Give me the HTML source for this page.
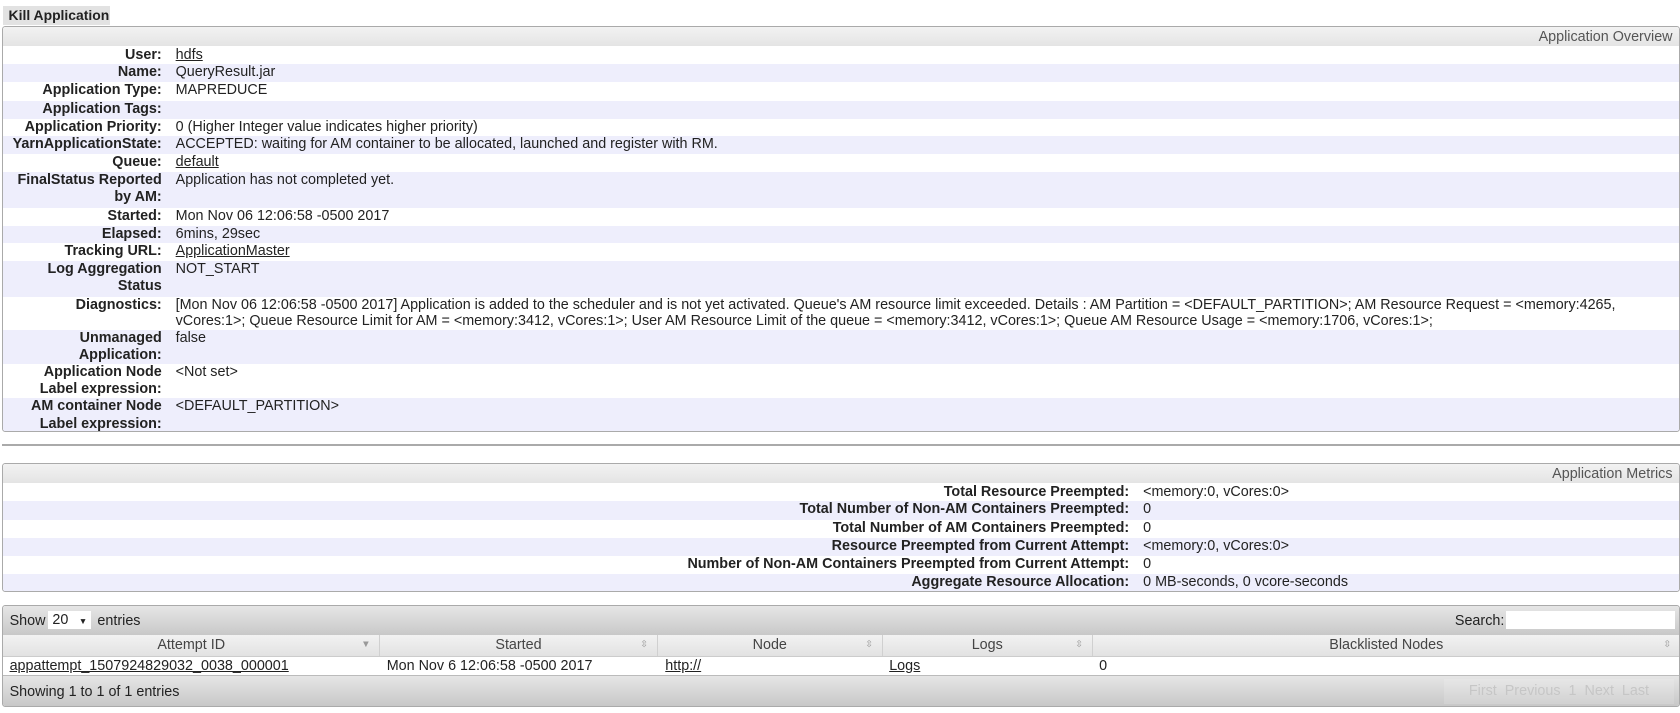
<!DOCTYPE html>
<html><head><meta charset="utf-8">
<style>
html,body{margin:0;padding:0;background:#fff;}
body{zoom:1.0714;width:1568px;height:665px;position:relative;overflow:hidden;font-family:"Liberation Sans",Arial,sans-serif;font-size:13.4px;color:#222;}
.abs{position:absolute;}
.kill{left:3px;top:6px;height:17px;width:100px;background:#e2e2e2;font-weight:bold;font-size:13px;line-height:18px;padding-left:5px;box-sizing:border-box;white-space:nowrap;}
.box{border:1px solid #aaa;border-radius:3px;box-sizing:border-box;overflow:hidden;}
.hdr{height:18px;background:linear-gradient(#f2f2f2,#e4e4e4);color:#555;text-align:right;padding-right:6px;line-height:20px;}
table{border-collapse:collapse;width:100%;table-layout:fixed;}
td{padding:0;vertical-align:top;line-height:16px;}
td.l{font-weight:bold;text-align:right;padding-right:13px;}
tr.o{background:#fff}
tr.e{background:#eeeefc}
a{color:#222;text-decoration:underline;}
.bar{background:linear-gradient(#e6e6e6,#c8c8c8);}
.th{position:absolute;top:0;height:19px;line-height:19px;text-align:center;color:#444;border-right:1px solid #d0d0d0;box-sizing:border-box;}
.ar{position:absolute;right:8px;top:0;color:#999;font-size:9px;}
</style></head><body>
<div class="abs kill">Kill Application</div>
<div class="abs box" style="left:2px;top:24px;width:1566px;height:379px;">
<div class="hdr">Application Overview</div>
<table>
<col style="width:161px"><col>
<tr class="o" style="height:17px"><td class="l" style="padding-top:1px">User:</td><td style="padding-top:1px"><a>hdfs</a></td></tr>
<tr class="e" style="height:17px"><td class="l">Name:</td><td>QueryResult.jar</td></tr>
<tr class="o" style="height:17px"><td class="l">Application Type:</td><td>MAPREDUCE</td></tr>
<tr class="e" style="height:17px"><td class="l">Application Tags:</td><td></td></tr>
<tr class="o" style="height:16px"><td class="l">Application Priority:</td><td>0 (Higher Integer value indicates higher priority)</td></tr>
<tr class="e" style="height:17px"><td class="l">YarnApplicationState:</td><td>ACCEPTED: waiting for AM container to be allocated, launched and register with RM.</td></tr>
<tr class="o" style="height:17px"><td class="l">Queue:</td><td><a>default</a></td></tr>
<tr class="e" style="height:33px"><td class="l">FinalStatus Reported by AM:</td><td>Application has not completed yet.</td></tr>
<tr class="o" style="height:17px"><td class="l">Started:</td><td>Mon Nov 06 12:06:58 -0500 2017</td></tr>
<tr class="e" style="height:16px"><td class="l">Elapsed:</td><td>6mins, 29sec</td></tr>
<tr class="o" style="height:17px"><td class="l">Tracking URL:</td><td><a>ApplicationMaster</a></td></tr>
<tr class="e" style="height:33px"><td class="l">Log Aggregation Status</td><td>NOT_START</td></tr>
<tr class="o" style="height:31px"><td class="l" style="line-height:15.5px">Diagnostics:</td><td style="line-height:15.5px">[Mon Nov 06 12:06:58 -0500 2017] Application is added to the scheduler and is not yet activated. Queue's AM resource limit exceeded. Details : AM Partition = &lt;DEFAULT_PARTITION&gt;; AM Resource Request = &lt;memory:4265, vCores:1&gt;; Queue Resource Limit for AM = &lt;memory:3412, vCores:1&gt;; User AM Resource Limit of the queue = &lt;memory:3412, vCores:1&gt;; Queue AM Resource Usage = &lt;memory:1706, vCores:1&gt;;</td></tr>
<tr class="e" style="height:32px"><td class="l">Unmanaged Application:</td><td>false</td></tr>
<tr class="o" style="height:32px"><td class="l">Application Node Label expression:</td><td>&lt;Not set&gt;</td></tr>
<tr class="e" style="height:40px"><td class="l">AM container Node Label expression:</td><td>&lt;DEFAULT_PARTITION&gt;</td></tr>
</table>
</div>
<div class="abs" style="left:2px;top:414px;width:1566px;height:2px;background:#aaa;"></div>
<div class="abs box" style="left:2px;top:432px;width:1566px;height:121px;">
<div class="hdr">Application Metrics</div>
<table>
<col style="width:1064px"><col>
<tr class="o" style="height:17px"><td class="l" style="padding-top:1px">Total Resource Preempted:</td><td style="padding-top:1px">&lt;memory:0, vCores:0&gt;</td></tr>
<tr class="e" style="height:17px"><td class="l">Total Number of Non-AM Containers Preempted:</td><td>0</td></tr>
<tr class="o" style="height:17px"><td class="l">Total Number of AM Containers Preempted:</td><td>0</td></tr>
<tr class="e" style="height:17px"><td class="l">Resource Preempted from Current Attempt:</td><td>&lt;memory:0, vCores:0&gt;</td></tr>
<tr class="o" style="height:17px"><td class="l">Number of Non-AM Containers Preempted from Current Attempt:</td><td>0</td></tr>
<tr class="e" style="height:20px"><td class="l">Aggregate Resource Allocation:</td><td>0 MB-seconds, 0 vcore-seconds</td></tr>
</table>
</div>
<div class="abs box" style="left:2px;top:565px;width:1566px;height:95px;">
<div class="bar" style="position:absolute;left:0;top:0;right:0;height:27px;border-bottom:1px solid #bbb;">
<span style="position:absolute;left:6px;top:6px;">Show</span>
<span style="position:absolute;left:42px;top:4px;width:40px;height:17px;background:#fff;line-height:17px;padding-left:4px;box-sizing:border-box;white-space:nowrap;">20 <span style="font-size:8px;margin-left:6px">▼</span></span>
<span style="position:absolute;left:88px;top:6px;">entries</span>
<span style="position:absolute;right:163px;top:6px;">Search:</span>
<span style="position:absolute;right:4px;top:4px;width:157px;height:17px;background:#fff;"></span>
</div>
<div style="position:absolute;left:0;top:27px;right:0;height:19px;background:linear-gradient(#f2f2f2,#e2e2e2);border-bottom:1px solid #ccc;">
<div class="th" style="left:0;width:352px;">Attempt ID<span class="ar">▼</span></div>
<div class="th" style="left:352px;width:259px;">Started<span class="ar">⇳</span></div>
<div class="th" style="left:611px;width:210px;">Node<span class="ar">⇳</span></div>
<div class="th" style="left:821px;width:196px;">Logs<span class="ar">⇳</span></div>
<div class="th" style="left:1017px;width:548px;border-right:none;">Blacklisted Nodes<span class="ar">⇳</span></div>
</div>
<div style="position:absolute;left:0;top:47px;right:0;height:17px;line-height:17px;">
<a style="position:absolute;left:6px;">appattempt_1507924829032_0038_000001</a>
<span style="position:absolute;left:358px;">Mon Nov 6 12:06:58 -0500 2017</span>
<a style="position:absolute;left:618px;">http://</a>
<a style="position:absolute;left:827px;">Logs</a>
<span style="position:absolute;left:1023px;">0</span>
</div>
<div class="bar" style="position:absolute;left:0;top:64px;right:0;bottom:0;border-top:1px solid #bbb;">
<span style="position:absolute;left:6px;top:8px;">Showing 1 to 1 of 1 entries</span>
<span style="position:absolute;right:5px;top:3px;height:23px;width:214px;background:rgba(255,255,255,0.15);color:#c6c6c6;line-height:23px;text-align:center;white-space:nowrap;">First &nbsp;Previous &nbsp;1 &nbsp;Next &nbsp;Last</span>
</div>
</div>
</body></html>
